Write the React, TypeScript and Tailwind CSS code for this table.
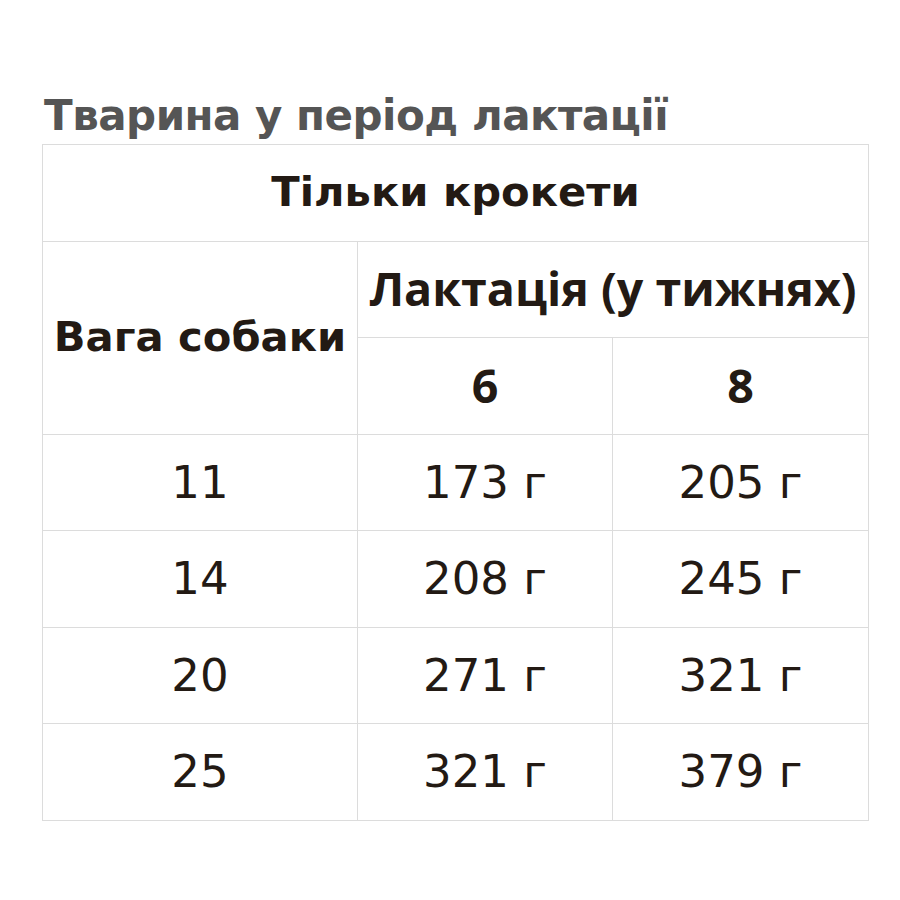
export default function App() {
  const rows = [
    ["11", "173 г", "205 г"],
    ["14", "208 г", "245 г"],
    ["20", "271 г", "321 г"],
    ["25", "321 г", "379 г"],
  ]
  const cell = "border border-[#dcdcdc] h-[96.5px] p-0 text-center align-middle whitespace-nowrap"
  const head = "font-bold text-[41.7px]"
  const sub = "font-bold font-['Open_Sans',sans-serif] text-[46.6px]"

  return (
    <div className="min-h-screen bg-white pt-[88px] pl-[42px] pr-[31px] font-['DejaVu_Sans',sans-serif]">
      <h2 className="text-[42px] font-bold text-[#555555] leading-[56px] pl-[2px] tracking-[-0.5px]">
        Тварина у період лактації
      </h2>
      <table className="w-[827px] table-fixed border-collapse text-[#231a14] text-[45px]">
        <colgroup>
          <col className="w-[315px]" />
          <col className="w-[255px]" />
          <col />
        </colgroup>
        <tbody>
          <tr>
            <th colSpan={3} className={`${cell} ${head}`}>Тільки крокети</th>
          </tr>
          <tr>
            <th rowSpan={2} className={`${cell} ${head}`}>Вага собаки</th>
            <th colSpan={2} className={`${cell} ${sub}`}>Лактація (у тижнях)</th>
          </tr>
          <tr>
            <th className={`${cell} ${sub}`}>6</th>
            <th className={`${cell} ${sub}`}>8</th>
          </tr>
          {rows.map((r, i) => (
            <tr key={i}>
              {r.map((v, j) => (
                <td key={j} className={cell}>{v}</td>
              ))}
            </tr>
          ))}
        </tbody>
      </table>
    </div>
  )
}
